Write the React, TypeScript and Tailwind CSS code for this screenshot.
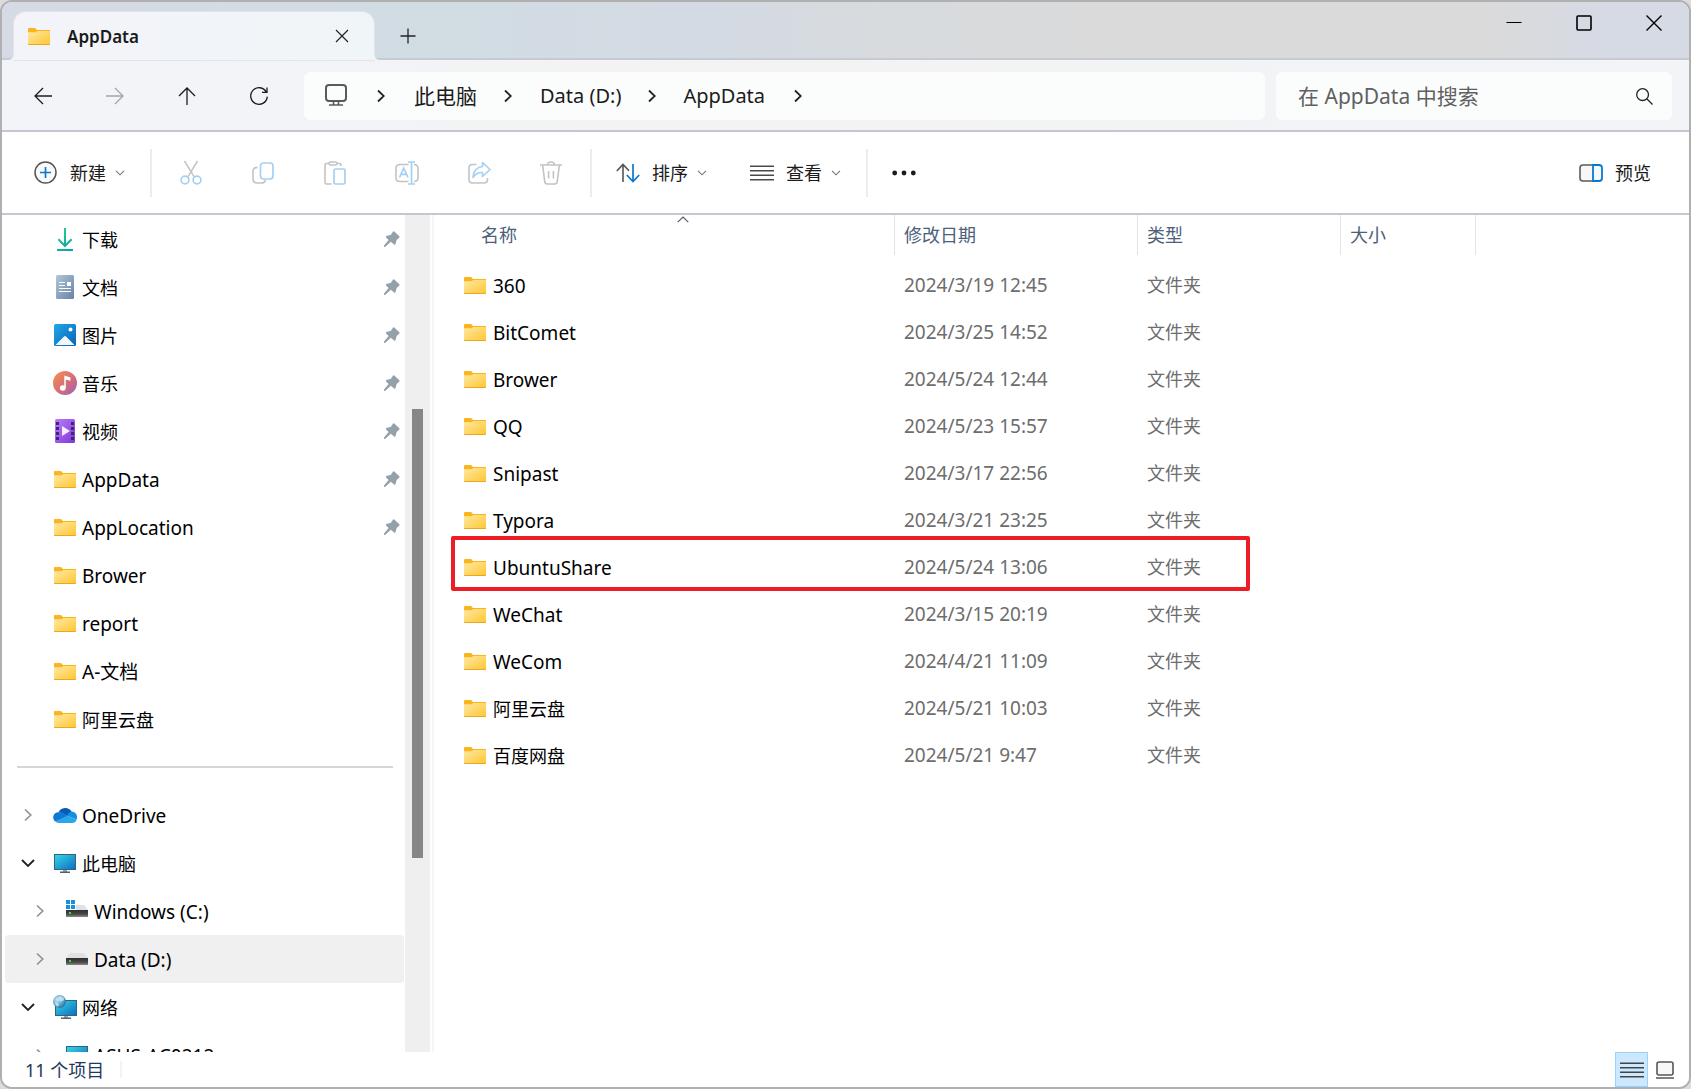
import React from "react";

/* ---------- shared helpers ---------- */

const hasLatin = (s: string) => /[A-Za-z0-9]/.test(s);

function Label({ children, className = "" }: { children: string; className?: string }) {
  return (
    <span className={`whitespace-nowrap leading-6 ${hasLatin(children) ? "text-[19px]" : "text-[18px]"} ${className}`}>
      {children}
    </span>
  );
}

type SvgProps = { w: number; h: number; children: React.ReactNode; className?: string };
function Svg({ w, h, children, className = "" }: SvgProps) {
  return (
    <svg
      width={w}
      height={h}
      viewBox={`0 0 ${w} ${h}`}
      fill="none"
      aria-hidden="true"
      className={`shrink-0 ${className}`}
    >
      {children}
    </svg>
  );
}

/* ---------- gradients used by the coloured icons ---------- */

function Gradients() {
  return (
    <svg width="0" height="0" className="absolute" aria-hidden="true">
      <defs>
        <linearGradient id="g-folder" x1="0" y1="0" x2="1" y2="1">
          <stop offset="0" stopColor="#ffe9a6" />
          <stop offset="1" stopColor="#ffc62f" />
        </linearGradient>
        <linearGradient id="g-down" x1="0" y1="0" x2="16" y2="23" gradientUnits="userSpaceOnUse">
          <stop offset="0" stopColor="#2bd08a" />
          <stop offset="1" stopColor="#0c9fa4" />
        </linearGradient>
        <linearGradient id="g-doc" x1="0" y1="0" x2="1" y2="1">
          <stop offset="0" stopColor="#b3c6d8" />
          <stop offset="1" stopColor="#6583a5" />
        </linearGradient>
        <linearGradient id="g-pic" x1="0" y1="0" x2="1" y2="1">
          <stop offset="0" stopColor="#1fa8ea" />
          <stop offset="1" stopColor="#0a62b4" />
        </linearGradient>
        <linearGradient id="g-music" x1="0" y1="0" x2="1" y2="1">
          <stop offset="0.1" stopColor="#f38b56" />
          <stop offset="0.6" stopColor="#cf6b7c" />
          <stop offset="1" stopColor="#9c5fc4" />
        </linearGradient>
        <linearGradient id="g-video" x1="0" y1="0" x2="1" y2="1">
          <stop offset="0" stopColor="#bb7df8" />
          <stop offset="1" stopColor="#7d36dd" />
        </linearGradient>
        <linearGradient id="g-screen" x1="0" y1="0" x2="1" y2="1">
          <stop offset="0" stopColor="#36d9e8" />
          <stop offset="1" stopColor="#0b6cc0" />
        </linearGradient>
        <linearGradient id="g-drive" x1="0" y1="0" x2="0" y2="1">
          <stop offset="0" stopColor="#2f2f2f" />
          <stop offset="0.6" stopColor="#4a4a4a" />
          <stop offset="1" stopColor="#8a8a8a" />
        </linearGradient>
        <radialGradient id="g-globe" cx="0.35" cy="0.35" r="0.7">
          <stop offset="0" stopColor="#d2ecf8" />
          <stop offset="0.6" stopColor="#5aa6cf" />
          <stop offset="1" stopColor="#2c6f9c" />
        </radialGradient>
      </defs>
    </svg>
  );
}

/* ---------- coloured icons ---------- */

function FolderIcon() {
  return (
    <Svg w={22} h={17}>
      <path d="M0 1.2A1.2 1.2 0 0 1 1.2 0H6.6C8 0 8 2 9.4 2H22V5H0Z" fill="#fab41c" />
      <path d="M0 4.2H7.4C8.6 4.2 8.6 3 9.8 3H22V16A1 1 0 0 1 21 17H1A1 1 0 0 1 0 16Z" fill="url(#g-folder)" />
      <path d="M0 16H22A1 1 0 0 1 21 17H1A1 1 0 0 1 0 16Z" fill="#e9a61f" />
    </Svg>
  );
}

function DownloadIcon() {
  return (
    <Svg w={16} h={23}>
      <path d="M8 0V18M1.4 11.2L8 18L14.6 11.2M0 22H16" stroke="url(#g-down)" strokeWidth="2" />
    </Svg>
  );
}

function DocumentIcon() {
  return (
    <Svg w={18} h={24}>
      <rect width="18" height="24" rx="1.5" fill="url(#g-doc)" />
      <path d="M3 7.5H9M3 10.5H9M3 13.5H15M3 16.5H15" stroke="#fff" strokeWidth="1.2" />
      <rect x="11" y="7" width="4" height="4" fill="#fff" />
    </Svg>
  );
}

function PictureIcon() {
  return (
    <Svg w={22} h={22}>
      <rect width="22" height="22" rx="1.5" fill="url(#g-pic)" />
      <path d="M1.5 21L10 12.4Q11 11.4 12 12.4L20.5 21Z" fill="#f1f7fd" />
      <circle cx="16.5" cy="5.5" r="2" fill="#fff" />
    </Svg>
  );
}

function MusicIcon() {
  return (
    <Svg w={24} h={24}>
      <circle cx="12" cy="12" r="12" fill="url(#g-music)" />
      <ellipse cx="9.8" cy="17" rx="2.9" ry="2.7" fill="#fff" />
      <path d="M11.3 17V4.6L17.4 6.4V9.8L12.8 8.6V17Z" fill="#fff" />
    </Svg>
  );
}

function VideoIcon() {
  return (
    <Svg w={20} h={24}>
      <rect width="20" height="24" rx="1.5" fill="url(#g-video)" />
      <g fill="#40296b">
        {[3, 8, 13, 18].map((y) => (
          <React.Fragment key={y}>
            <rect x="1" y={y} width="3" height="3" />
            <rect x="16" y={y} width="3" height="3" />
          </React.Fragment>
        ))}
      </g>
      <path d="M7 7L15 12L7 17Z" fill="#f4ecff" />
    </Svg>
  );
}

function OneDriveIcon() {
  return (
    <Svg w={24} h={16}>
      <path d="M5.5 5.4A7.4 7.4 0 0 1 18.6 4.6L15 9.5L9 6Z" fill="#0a5bb5" />
      <path d="M5.3 5.2Q8.2 5 10.4 6.4L15.4 9.4L2.4 14.6A5.2 5.2 0 0 1 5.3 5.2Z" fill="#0f78d4" />
      <path d="M18.6 4.6A5.6 5.6 0 0 1 23.6 12.5L14 8.8Q16 5 18.6 4.6Z" fill="#1490df" />
      <path d="M2.4 14.6L14.2 8.8L23.6 12.4A5 5 0 0 1 19 16H5.4Q3.6 16 2.4 14.6Z" fill="#28a8ea" />
    </Svg>
  );
}

function ComputerIcon() {
  return (
    <Svg w={22} h={19}>
      <rect x="0.5" y="0.5" width="21" height="15" fill="url(#g-screen)" stroke="#33647c" />
      <rect x="9" y="16" width="4" height="2" fill="#9aa3ab" />
      <rect x="6" y="17.5" width="10" height="1.5" fill="#54606c" />
    </Svg>
  );
}

function DriveIcon() {
  return (
    <Svg w={22} h={12}>
      <path d="M4 0H18L22 5H0Z" fill="#dfe1e4" />
      <rect y="5" width="22" height="7" fill="url(#g-drive)" />
      <rect x="3" y="7" width="2" height="2" fill="#3ae03a" />
    </Svg>
  );
}

function SystemDriveIcon() {
  return (
    <Svg w={22} h={18} className="mb-1">
      <path d="M4 5H18L22 10H0Z" fill="#dfe1e4" />
      <rect y="10" width="22" height="7" fill="url(#g-drive)" />
      <rect x="3" y="12" width="2" height="2" fill="#3ae03a" />
      <rect width="10" height="10" fill="#fff" />
      <g fill="#1592dd">
        <rect width="4" height="4" />
        <rect x="5" width="4" height="4" />
        <rect y="5" width="4" height="4" />
        <rect x="5" y="5" width="4" height="4" />
      </g>
    </Svg>
  );
}

function NetworkIcon() {
  return (
    <Svg w={24} h={24}>
      <rect x="2.5" y="5.5" width="21" height="15" fill="url(#g-screen)" stroke="#33647c" />
      <rect x="11" y="21" width="4" height="2" fill="#9aa3ab" />
      <rect x="8" y="22.5" width="10" height="1.5" fill="#54606c" />
      <circle cx="6.5" cy="6.5" r="6.5" fill="url(#g-globe)" />
      <path d="M6 1Q10 1 11.5 4Q10 7 7.5 6Q5 4 6 1ZM2 7Q5 7 6 10Q5 12 4 11.5Q2 10 2 7Z" fill="#d9eef8" opacity="0.7" />
    </Svg>
  );
}

function PinIcon() {
  return (
    <Svg w={16} h={16}>
      <path
        d="M9 0.4Q9.8 0 10.6 0.7L15.3 5.2Q16 6 15.2 6.8L12.6 8.9L11.6 13Q11 14 10.2 13.4L6.8 10.7L1.2 16L0 15.8V14.6L4.6 9L2 6.4Q1.4 5.6 2.3 5L7 3.7Z"
        fill="#95a1a8"
      />
    </Svg>
  );
}

/* ---------- line icons ---------- */

function ChevronDownSmall() {
  return (
    <Svg w={10} h={6}>
      <path d="M1 0.8L5 4.8L9 0.8" stroke="#757575" strokeWidth="1.1" />
    </Svg>
  );
}

function ChevronRight({ muted = false }: { muted?: boolean }) {
  return (
    <Svg w={8} h={14}>
      <path d="M1 1.5L6.8 7L1 12.5" stroke={muted ? "#8f8f8f" : "#222"} strokeWidth={muted ? 1.6 : 1.8} />
    </Svg>
  );
}

function ChevronDown() {
  return (
    <Svg w={14} h={8}>
      <path d="M1 1L7 7L13 1" stroke="#222" strokeWidth="1.8" />
    </Svg>
  );
}

const ARROW = "#1c1c1c";

/* ---------- data ---------- */

type Node = {
  name: string;
  icon: React.ReactNode;
  level?: 0 | 1;
  state?: "open" | "closed";
  pinned?: boolean;
  selected?: boolean;
};

const quickAccess: Node[] = [
  { name: "下载", icon: <DownloadIcon />, pinned: true },
  { name: "文档", icon: <DocumentIcon />, pinned: true },
  { name: "图片", icon: <PictureIcon />, pinned: true },
  { name: "音乐", icon: <MusicIcon />, pinned: true },
  { name: "视频", icon: <VideoIcon />, pinned: true },
  { name: "AppData", icon: <FolderIcon />, pinned: true },
  { name: "AppLocation", icon: <FolderIcon />, pinned: true },
  { name: "Brower", icon: <FolderIcon /> },
  { name: "report", icon: <FolderIcon /> },
  { name: "A-文档", icon: <FolderIcon /> },
  { name: "阿里云盘", icon: <FolderIcon /> },
];

const places: Node[] = [
  { name: "OneDrive", icon: <OneDriveIcon />, state: "closed" },
  { name: "此电脑", icon: <ComputerIcon />, state: "open" },
  { name: "Windows (C:)", icon: <SystemDriveIcon />, level: 1, state: "closed" },
  { name: "Data (D:)", icon: <DriveIcon />, level: 1, state: "closed", selected: true },
  { name: "网络", icon: <NetworkIcon />, state: "open" },
  { name: "ASUS-AC0212", icon: <ComputerIcon />, level: 1, state: "closed" },
];

const files = [
  { name: "360", date: "2024/3/19 12:45" },
  { name: "BitComet", date: "2024/3/25 14:52" },
  { name: "Brower", date: "2024/5/24 12:44" },
  { name: "QQ", date: "2024/5/23 15:57" },
  { name: "Snipast", date: "2024/3/17 22:56" },
  { name: "Typora", date: "2024/3/21 23:25" },
  { name: "UbuntuShare", date: "2024/5/24 13:06", marked: true },
  { name: "WeChat", date: "2024/3/15 20:19" },
  { name: "WeCom", date: "2024/4/21 11:09" },
  { name: "阿里云盘", date: "2024/5/21 10:03" },
  { name: "百度网盘", date: "2024/5/21 9:47" },
];

/* ---------- title bar ---------- */

function TitleBar() {
  return (
    <header className="flex h-[58px] shrink-0 bg-[linear-gradient(90deg,#d5dae4_0%,#d1dce3_26%,#d4dae3_42%,#d7dbde_52%,#dadadb_65%,#dadadb_88%,#d6dae4_95%)] shadow-[inset_0_-2px_0_#c6cad3]">
      <div className="relative ml-3 mt-[10px] flex w-[360px] items-center rounded-t-xl bg-linear-to-r from-[#f3f4f9] to-[#f0f5f8] pl-[14px] pr-[25px] shadow-[0_0_1px_1px_#dfe4eb]">
        <Svg w={6} h={6} className="absolute -left-[6px] bottom-0">
          <path d="M6 0V6H0A6 6 0 0 0 6 0Z" fill="#f3f4f9" />
        </Svg>
        <Svg w={6} h={6} className="absolute -right-[6px] bottom-0">
          <path d="M0 0V6H6A6 6 0 0 1 0 0Z" fill="#f0f5f8" />
        </Svg>
        <FolderIcon />
        <span className="ml-[17px] flex-1 pt-[2px] text-[17px] font-semibold leading-6 text-[#1b1b1b]">AppData</span>
        <button aria-label="关闭选项卡" className="flex size-[14px] items-center justify-center">
          <Svg w={14} h={14}>
            <path d="M1 1L13 13M13 1L1 13" stroke="#222" strokeWidth="1.2" />
          </Svg>
        </button>
      </div>
      <button aria-label="新建选项卡" className="ml-[18px] mt-[10px] flex w-8 items-center justify-center">
        <Svg w={16} h={16}>
          <path d="M8 0.5V15.5M0.5 8H15.5" stroke="#222" strokeWidth="1.3" />
        </Svg>
      </button>
      <div className="ml-auto flex h-[41px]">
        <button aria-label="最小化" className="flex w-[70px] items-center justify-center">
          <Svg w={16} h={16}>
            <path d="M0.5 7.5H15.5" stroke="#000" />
          </Svg>
        </button>
        <button aria-label="最大化" className="flex w-[70px] items-center justify-center">
          <Svg w={16} h={16}>
            <rect x="1" y="1" width="14" height="14" rx="1" stroke="#000" strokeWidth="1.6" />
          </Svg>
        </button>
        <button aria-label="关闭" className="flex w-[70px] items-center justify-center">
          <Svg w={16} h={16}>
            <path d="M0.5 0.5L15.5 15.5M15.5 0.5L0.5 15.5" stroke="#000" strokeWidth="1.4" />
          </Svg>
        </button>
      </div>
    </header>
  );
}

/* ---------- address bar ---------- */

function NavButton({ label, children }: { label: string; children: React.ReactNode }) {
  return (
    <button aria-label={label} className="flex h-12 w-[72px] shrink-0 items-center justify-center">
      {children}
    </button>
  );
}

function AddressBar() {
  return (
    <div className="flex h-[72px] shrink-0 items-center border-b-2 border-[#c5c7d0] bg-linear-to-r from-[#f3f4f9] via-[#f3f3f4] to-[#f2f4f8] pl-[5px] pr-[17px] pt-[2px]">
      <NavButton label="后退">
        <Svg w={18} h={18}>
          <path d="M18 9H1M9 1L1 9L9 17" stroke={ARROW} strokeWidth="1.3" />
        </Svg>
      </NavButton>
      <NavButton label="前进">
        <Svg w={18} h={18}>
          <path d="M0 9H17M9 1L17 9L9 17" stroke="#a3a5a8" strokeWidth="1.3" />
        </Svg>
      </NavButton>
      <NavButton label="上移">
        <Svg w={18} h={18}>
          <path d="M9 18V1M1 9L9 1L17 9" stroke={ARROW} strokeWidth="1.3" />
        </Svg>
      </NavButton>
      <NavButton label="刷新">
        <Svg w={18} h={18}>
          <path d="M16.3 5A8.3 8.3 0 1 0 17.3 9.6M17 0.4V5.4H12" stroke={ARROW} strokeWidth="1.3" />
        </Svg>
      </NavButton>
      <nav
        aria-label="地址"
        className="ml-[9px] flex h-12 min-w-0 flex-1 items-center rounded-md bg-[#fbfdfd] pl-[21px] text-[20px] leading-7 text-[#1b1b1b]"
      >
        <button aria-label="位置" className="mb-[2px]">
          <Svg w={22} h={22}>
            <rect x="1" y="1" width="20" height="16" rx="3" stroke="#5a5a5a" strokeWidth="2" />
            <path d="M8.5 17V21M13.5 17V21M4 21H18" stroke="#5a5a5a" strokeWidth="1.6" />
          </Svg>
        </button>
        <span className="ml-[30px]"><ChevronRight /></span>
        <button className="ml-[29px] text-[21px]">此电脑</button>
        <span className="ml-[27px]"><ChevronRight /></span>
        <button className="ml-7">Data (D:)</button>
        <span className="ml-[27px]"><ChevronRight /></span>
        <button className="ml-[27px]">AppData</button>
        <span className="ml-[29px]"><ChevronRight /></span>
      </nav>
      <label className="ml-[11px] flex h-12 w-[396px] items-center rounded-md bg-[#fbfdfd] pl-[22px] pr-[19px]">
        <input
          type="search"
          aria-label="搜索"
          placeholder="在 AppData 中搜索"
          className="min-w-0 flex-1 bg-transparent text-[21px] leading-7 outline-none placeholder:text-[#606060]"
        />
        <Svg w={17} h={17}>
          <circle cx="6.6" cy="6.6" r="5.9" stroke="#222" strokeWidth="1.3" />
          <path d="M11 11L16.5 16.5" stroke="#222" strokeWidth="1.3" />
        </Svg>
      </label>
    </div>
  );
}

/* ---------- command bar ---------- */

const Divider = () => <span className="block h-12 w-[2px] shrink-0 bg-[#ededed]" />;

function ToolButton({ label, children }: { label: string; children: React.ReactNode }) {
  return (
    <button aria-label={label} disabled className="flex h-12 w-[72px] shrink-0 items-center justify-center">
      {children}
    </button>
  );
}

const GREY = "#c3c3c3";
const BLUE = "#a3d0f3";

function CommandBar() {
  return (
    <div className="flex h-[83px] shrink-0 items-center border-b-2 border-[#c5c7d0] bg-white pl-8 pr-[38px] text-[18px] leading-6 text-[#1b1b1b]">
      <button className="flex items-center">
        <Svg w={24} h={24}>
          <circle cx="11.5" cy="11.5" r="10.5" stroke="#555" strokeWidth="1.5" fill="#fafafa" />
          <path d="M11.5 6V17M6 11.5H17" stroke="#0a78d1" strokeWidth="1.7" />
        </Svg>
        <span className="ml-3 mr-[9px]">新建</span>
        <ChevronDownSmall />
      </button>
      <span className="ml-[25px]"><Divider /></span>
      <div className="ml-[3px] flex">
        <ToolButton label="剪切">
          <Svg w={22} h={26}>
            <path d="M4.5 1L14.2 16.8M17.5 1L7.8 16.8" stroke={GREY} strokeWidth="1.5" />
            <circle cx="5" cy="20" r="3.9" stroke={BLUE} strokeWidth="1.7" />
            <circle cx="17" cy="20" r="3.9" stroke={BLUE} strokeWidth="1.7" />
          </Svg>
        </ToolButton>
        <ToolButton label="复制">
          <Svg w={22} h={22}>
            <path d="M5.5 5.4Q1 5.4 1 9V17Q1 21 5 21H9Q13 21 13.5 18" stroke={GREY} strokeWidth="1.6" />
            <rect x="8.5" y="1" width="12.5" height="16" rx="3" stroke={BLUE} strokeWidth="1.7" />
          </Svg>
        </ToolButton>
        <ToolButton label="粘贴">
          <Svg w={22} h={24}>
            <path d="M5 2.5H2.5Q1 2.5 1 4V21.5Q1 23 2.5 23H7.5M13 2.5H15.5Q17 2.5 17 4V5" stroke={GREY} strokeWidth="1.6" />
            <rect x="5" y="1" width="8" height="3" rx="1.5" stroke={GREY} strokeWidth="1.5" />
            <rect x="10" y="8" width="11" height="15" rx="1.5" stroke={BLUE} strokeWidth="1.7" />
          </Svg>
        </ToolButton>
        <ToolButton label="重命名">
          <Svg w={24} h={24}>
            <path d="M13.5 3.5H5Q1 3.5 1 7V17Q1 20.5 5 20.5H13.5M19 3.5Q23 3.5 23 7.5V16.5Q23 20.5 19 20.5" stroke={GREY} strokeWidth="1.6" />
            <path d="M4.5 16.5L8.7 7L13 16.5M6 13.3H11.5" stroke={BLUE} strokeWidth="1.7" />
            <path d="M16.5 1V23M13 1H20M13 23H20" stroke={BLUE} strokeWidth="1.7" />
          </Svg>
        </ToolButton>
        <ToolButton label="共享">
          <Svg w={24} h={24}>
            <path d="M9.5 3.5H5.5Q2 3.5 2 7V18.5Q2 22 5.5 22H17Q20.5 22 20.5 18.5V17" stroke={GREY} strokeWidth="1.6" />
            <path d="M15.5 1.5L23 8.5L15.5 15.5V11.5Q9.5 11 6 16.5Q6.5 6.5 15.5 5.5Z" stroke={BLUE} strokeWidth="1.6" strokeLinejoin="round" />
          </Svg>
        </ToolButton>
        <ToolButton label="删除">
          <Svg w={22} h={24}>
            <path d="M0 4H22M7.5 4Q7.5 1 11 1Q14.5 1 14.5 4M2.6 4L4.8 20.8Q5 23 7.2 23H14.8Q17 23 17.2 20.8L19.4 4M8.6 10V17.5M13.4 10V17.5" stroke={GREY} strokeWidth="1.6" />
          </Svg>
        </ToolButton>
      </div>
      <span className="ml-[3px]"><Divider /></span>
      <button className="ml-6 flex items-center">
        <Svg w={24} h={20}>
          <path d="M7 19V1.5M0.8 8L7 1.5L13 7.7" stroke="#555" strokeWidth="1.6" />
          <path d="M17 1V18.5M10.8 12L17 18.5L23.2 12" stroke="#0a78d1" strokeWidth="1.7" />
        </Svg>
        <span className="ml-3 mr-[9px]">排序</span>
        <ChevronDownSmall />
      </button>
      <button className="ml-[43px] flex items-center">
        <Svg w={24} h={16}>
          <path d="M0 1.2H24M0 5.8H24M0 10.3H24M0 14.8H24" stroke="#4a4a4a" strokeWidth="1.5" />
        </Svg>
        <span className="ml-3 mr-[9px]">查看</span>
        <ChevronDownSmall />
      </button>
      <span className="ml-[25px]"><Divider /></span>
      <button aria-label="查看更多" className="ml-6">
        <Svg w={24} h={6}>
          <g fill="#1b1b1b">
            <circle cx="2.7" cy="3" r="2.4" />
            <circle cx="12" cy="3" r="2.4" />
            <circle cx="21.3" cy="3" r="2.4" />
          </g>
        </Svg>
      </button>
      <button className="ml-auto flex items-center gap-3">
        <Svg w={24} h={18}>
          <path d="M14 1H4Q1 1 1 4V14Q1 17 4 17H14" stroke="#5a5a5a" strokeWidth="1.6" fill="#f7f7f7" />
          <path d="M14 1H20Q23 1 23 4V14Q23 17 20 17H14Z" stroke="#0a78d1" strokeWidth="1.8" fill="#f4faff" />
        </Svg>
        <span>预览</span>
      </button>
    </div>
  );
}

/* ---------- navigation pane ---------- */

function TreeRow({ node }: { node: Node }) {
  return (
    <li>
      <a
        href="#"
        className={`mr-px flex h-12 items-center rounded-sm pr-1 text-black ${node.level ? "pl-6" : "pl-3"} ${
          node.selected ? "bg-[#f0f0f0]" : ""
        }`}
      >
        <span className="flex w-[22px] shrink-0 justify-center">
          {node.state === "closed" && <ChevronRight muted />}
          {node.state === "open" && <ChevronDown />}
        </span>
        <span className="ml-[14px] flex w-6 shrink-0 justify-center">{node.icon}</span>
        <Label className="ml-[5px] flex-1 pt-[2px]">{node.name}</Label>
        {node.pinned && <PinIcon />}
      </a>
    </li>
  );
}

function Sidebar() {
  return (
    <aside className="flex w-[432px] shrink-0 border-r-2 border-[#f5f5f5]">
      <div className="min-w-0 flex-1 overflow-hidden pl-[3px]">
        <ul>
          {quickAccess.map((n) => (
            <TreeRow key={n.name} node={n} />
          ))}
        </ul>
        <div className="flex h-12 items-center pl-3 pr-3">
          <hr className="w-full border-t-2 border-[#d6d6d6]" />
        </div>
        <ul>
          {places.map((n) => (
            <TreeRow key={n.name} node={n} />
          ))}
        </ul>
      </div>
      <div className="mr-[2px] flex w-[25px] shrink-0 justify-center bg-[#efefef] pt-[194px]">
        <div className="h-[449px] w-[11px] bg-[#868686]" />
      </div>
    </aside>
  );
}

/* ---------- file list ---------- */

function FileList() {
  const th = "relative h-10 border-r border-[#e3e3e3] p-0 pl-[9px] text-[18px] leading-6 font-normal text-[#4c607a]";
  return (
    <main className="min-w-0 flex-1 overflow-hidden">
      <table className="w-full table-fixed border-separate border-spacing-0 text-left">
        <colgroup>
          <col className="w-[461px]" />
          <col className="w-[243px]" />
          <col className="w-[203px]" />
          <col className="w-[135px]" />
          <col />
        </colgroup>
        <thead>
          <tr>
            <th scope="col" aria-sort="ascending" className={`${th} pl-[47px]`}>
              <Svg w={12} h={7} className="absolute top-px left-[243px]">
                <path d="M0.7 6.2L6 1L11.3 6.2" stroke="#555" strokeWidth="1.1" />
              </Svg>
              名称
            </th>
            <th scope="col" className={th}>修改日期</th>
            <th scope="col" className={th}>类型</th>
            <th scope="col" className={th}>大小</th>
            <td />
          </tr>
          <tr aria-hidden="true">
            <td colSpan={5} className="h-[7px] p-0" />
          </tr>
        </thead>
        <tbody>
          {files.map((f) => (
            <tr key={f.name}>
              <td className="relative h-[47px] p-0 pl-[30px]">
                <span className="flex items-center gap-[7px] text-black">
                  <FolderIcon />
                  <Label>{f.name}</Label>
                </span>
                {f.marked && (
                  <span className="pointer-events-none absolute -top-2 bottom-0 left-[17px] w-[799px] rounded-xs border-4 border-[#ee1c25]" />
                )}
              </td>
              <td className="p-0 pl-[9px] text-[#6d6d6d]">
                <Label>{f.date}</Label>
              </td>
              <td className="p-0 pl-[9px] text-[#6d6d6d]">
                <Label>文件夹</Label>
              </td>
              <td />
              <td />
            </tr>
          ))}
        </tbody>
      </table>
    </main>
  );
}

/* ---------- status bar ---------- */

function StatusBar() {
  return (
    <footer className="flex h-[35px] shrink-0 items-center bg-white pl-[23px] pr-[7px]">
      <span className="text-[18px] leading-6 text-[#1e395b]">11 个项目</span>
      <span className="ml-4 h-[17px] w-[2px] bg-[#f3f3f3]" />
      <button
        aria-label="详细信息"
        aria-pressed="true"
        className="ml-auto flex h-full w-[33px] items-center justify-center border border-[#99d1ff] bg-[#cce8ff]"
      >
        <Svg w={24} h={16}>
          <path d="M0 1.2H24M0 5.8H24M0 10.3H24M0 14.8H24" stroke="#444" strokeWidth="1.5" />
        </Svg>
      </button>
      <button aria-label="大图标" className="flex h-full w-[34px] items-center justify-center">
        <Svg w={18} h={18}>
          <rect x="1" y="1" width="16" height="13" rx="2" stroke="#555" strokeWidth="1.6" fill="#f7f7f7" />
          <path d="M0 17H18" stroke="#555" strokeWidth="1.5" />
        </Svg>
      </button>
    </footer>
  );
}

export default function App() {
  return (
    <div className="h-screen bg-[#dcdcdc] font-['Noto_Sans','Noto_Sans_CJK_SC',sans-serif]">
      <Gradients />
      <div className="flex h-full flex-col overflow-hidden rounded-xl border-2 border-[#b0b0b0] bg-white">
        <TitleBar />
        <AddressBar />
        <CommandBar />
        <div className="flex min-h-0 flex-1">
          <Sidebar />
          <FileList />
        </div>
        <StatusBar />
      </div>
    </div>
  );
}
